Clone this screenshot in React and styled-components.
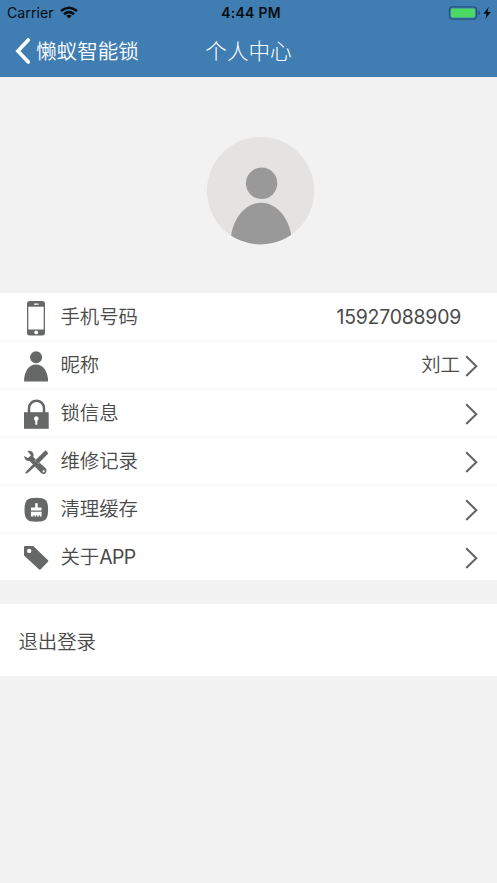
import React from "react";
import styled, { createGlobalStyle } from "styled-components";

const GlobalStyle = createGlobalStyle`
  * { box-sizing: border-box; }
  html, body { margin: 0; background: #f2f2f2; }
  body {
    font-family: Inter, "Noto Sans CJK SC", sans-serif;
    color: #4a4a4a;
    overflow: hidden;
  }
  svg { display: block; flex: none; }
`;

const Screen = styled.main`
  display: flex;
  flex-direction: column;
  width: 497px;
  height: 883px;
  background: #f2f2f2;
`;

const Header = styled.header`
  height: 77px;
  background: #3f7db3;
`;

const StatusBar = styled.div`
  display: grid;
  grid-template-columns: 1fr auto 1fr;
  align-items: center;
  height: 25px;
  padding: 0 6px 0 7px;
  color: #080c10;
  font-size: 14.1px;
  line-height: 24px;
`;

const Carrier = styled.div`
  display: flex;
  align-items: center;
  gap: 6px;
  letter-spacing: 0.05px;
`;

const Clock = styled.div`
  font-size: 13.9px;
  font-weight: 600;
  letter-spacing: 0.3px;
  padding: 1px 0 0 4px;
`;

const Power = styled.div`
  justify-self: end;
`;

const NavBar = styled.nav`
  display: grid;
  grid-template-columns: 1fr auto 1fr;
  align-items: center;
  height: 52px;
  padding: 0 15px;
  color: #fff;
`;

const BackButton = styled.button`
  display: flex;
  align-items: center;
  gap: 5px;
  padding: 0;
  border: 0;
  background: none;
  color: inherit;
  font: inherit;
  font-size: 20.6px;
  font-weight: 350;
  line-height: 30px;
`;

const BackText = styled.span`
  padding-top: 1px;
`;

const Title = styled.h1`
  margin: 0;
  font-size: 21.6px;
  font-weight: 300;
  line-height: 30px;
`;

const Profile = styled.section`
  height: 216px;
  padding: 60px 0 0 207px;
`;

const List = styled.ul`
  margin: 0;
  padding: 0;
  list-style: none;
  background: #fff;
`;

const Row = styled.li`
  display: flex;
  align-items: center;
  height: ${(p) => (p.$last ? 47 : 48)}px;
  padding: 0 19px 0 20px;
  border-bottom: ${(p) => (p.$last ? "0" : "1px solid #f4f4f4")};
  font-size: 19.4px;
  font-weight: 350;
  line-height: 28px;
`;

const Label = styled.span`
  margin-left: 8.4px;
  padding-top: 1px;
`;

const Latin = styled.span`
  letter-spacing: -0.6px;
  font-weight: 400;
`;

const Value = styled.span`
  margin-left: auto;
  margin-right: ${(p) => (p.$plain ? 17 : 5)}px;
  padding-top: ${(p) => (p.$plain ? 0 : 1)}px;
  font-weight: ${(p) => (p.$plain ? 400 : 350)};
  letter-spacing: ${(p) => (p.$plain ? "-0.2px" : "0")};
`;

const Logout = styled.button`
  display: flex;
  align-items: center;
  height: 72px;
  margin-top: 24px;
  padding: 1px 18.4px 0;
  border: 0;
  background: #fff;
  color: inherit;
  font: inherit;
  font-size: 19.4px;
  font-weight: 350;
`;

const WifiIcon = () => (
  <svg width="18" height="13" viewBox="0 0 18 13" fill="none" stroke="currentColor" strokeWidth="2.6">
    <path d="M1 5.1Q9 -1.6 17 5.1" />
    <path d="M4 8.2Q9 4 14 8.2" />
    <path d="M9 12.5L6.3 9.8Q9 7.7 11.7 9.8Z" fill="currentColor" stroke="none" />
  </svg>
);

const BatteryIcon = () => (
  <svg width="43" height="14" viewBox="0 0 43 14">
    <rect x="1.4" y="0.9" width="27.2" height="12.2" rx="3" fill="none" stroke="#26547c" strokeWidth="1.2" />
    <rect x="3" y="2.5" width="24" height="9" rx="1.4" fill="#4cd964" />
    <path d="M30.2 4.7Q31.9 5.2 31.9 7T30.2 9.3Z" fill="#26547c" />
    <path d="M40.7 1L35.4 7.8H38.6L37.4 13L42.7 6.1H39.4Z" fill="#080c10" />
  </svg>
);

const BackIcon = () => (
  <svg width="16" height="28" viewBox="0 0 16 28" fill="none" stroke="currentColor" strokeWidth="3.7" strokeLinecap="round">
    <path d="M13.3 3L2.9 14L13.3 25" strokeLinejoin="miter" />
  </svg>
);

const Avatar = () => (
  <svg width="108" height="108" viewBox="0 0 108 108">
    <clipPath id="avatarCircle"><circle cx="53.6" cy="53.7" r="53.7" /></clipPath>
    <circle cx="53.6" cy="53.7" r="53.7" fill="#e4e3e2" />
    <g clipPath="url(#avatarCircle)" fill="#999">
      <circle cx="54.6" cy="46.3" r="15.7" />
      <path d="M24 108V99C27 79 40 65.7 54.3 65.7S81 79 84.2 98V108Z" />
    </g>
  </svg>
);

const Chevron = styled(({ className }) => (
  <svg className={className} width="13" height="22" viewBox="0 0 13 22" fill="none" stroke="#666" strokeWidth="2.1">
    <path d="M1.2 1.3L11.3 11.2L1.2 21" />
  </svg>
))`
  margin-top: 3px;
  margin-left: ${(p) => (p.$push ? "auto" : "0")};
`;

const RowIcon = ({ children }) => (
  <svg width="32" height="47" viewBox="20 0 32 47" fill="#666867">{children}</svg>
);

const PhoneIcon = () => (
  <RowIcon>
    <rect x="27" y="8" width="18" height="34.5" rx="2.7" />
    <path fill="#fff" d="M28.3 13.7H43.7V36.5H28.3Z" />
    <rect x="33.8" y="10.4" width="5" height="1.3" rx="0.6" fill="#fff" />
    <circle cx="36.2" cy="39.4" r="1.9" fill="#fff" />
  </RowIcon>
);

const PersonIcon = () => (
  <RowIcon>
    <circle cx="36.1" cy="16.2" r="6" />
    <path d="M24 40.4C24.2 30.8 28.5 23.6 36 23.6S47.9 30.8 48.1 40.4Z" />
  </RowIcon>
);

const LockIcon = () => (
  <RowIcon>
    <path d="M24 23.2H48.7V39.8H24Z" />
    <path d="M29 24V19.5C29 9.2 44 9.2 44 19.5V24" fill="none" stroke="#666867" strokeWidth="2.5" />
    <path fill="#fff" d="M36.3 27.2A2.4 2.4 0 0 1 37.4 31.7L37.2 35.7H35.4L35.2 31.7A2.4 2.4 0 0 1 36.3 27.2Z" />
  </RowIcon>
);

const ToolsIcon = () => (
  <RowIcon>
    <path d="M27.3 14Q31 13 33.2 16Q34.2 18 33.3 20.1L46.2 31.7Q47.5 34.4 45.4 36.5Q42.6 38 40.6 35.6L29.6 23.9Q25 24.7 24 19.1L28 21L31 18.2Z" />
    <circle cx="43.7" cy="34.3" r="1.1" fill="#fff" />
    <path d="M47.3 14.5L45.2 13.3L34.8 23.6L38.2 27L48.4 16.6Z" stroke="#fff" strokeWidth="0.4" />
    <path d="M35.8 24.5L38 26.4L29.1 34.8L26.4 36.8L25.2 35.8L27.2 33.2Z" />
  </RowIcon>
);

const CleanIcon = () => (
  <RowIcon>
    <path d="M36.3 12.8C45.6 12.8 48.1 15.5 48.1 24.8S45.6 36.8 36.3 36.8S24.5 34.1 24.5 24.8S27 12.8 36.3 12.8Z" />
    <path fill="#fff" d="M35.2 18.2H37.7V22.6H41.5V25.6H31V22.6H35.2ZM31 26.7H41.6V31.6H39.8V30H38.9V31.6H37.1V30H36.2V31.6H34.5V30H33.6V31.6H31Z" />
  </RowIcon>
);

const TagIcon = () => (
  <RowIcon>
    <path d="M24 14.2Q24 13.1 25.1 13.1H33.2L48.1 27.3Q48.7 28 48 28.7L40.8 36.3Q40 37.1 39.2 36.4L24 22.4Z" />
    <circle cx="29.2" cy="17.9" r="2.2" fill="#fff" />
  </RowIcon>
);

const items = [
  { label: "手机号码", Icon: PhoneIcon, value: "15927088909", plain: true },
  { label: "昵称", Icon: PersonIcon, value: "刘工" },
  { label: "锁信息", Icon: LockIcon },
  { label: "维修记录", Icon: ToolsIcon },
  { label: "清理缓存", Icon: CleanIcon },
  { label: "关于", latin: "APP", Icon: TagIcon },
];

export default function App() {
  return (
    <Screen>
      <GlobalStyle />
      <Header>
        <StatusBar>
          <Carrier>Carrier <WifiIcon /></Carrier>
          <Clock>4:44 PM</Clock>
          <Power><BatteryIcon /></Power>
        </StatusBar>
        <NavBar>
          <BackButton><BackIcon /><BackText>懒蚁智能锁</BackText></BackButton>
          <Title>个人中心</Title>
        </NavBar>
      </Header>
      <Profile><Avatar /></Profile>
      <List>
        {items.map(({ label, latin, Icon, value, plain }, i) => (
          <Row key={label} $last={i === items.length - 1}>
            <Icon />
            <Label>{label}{latin && <Latin>{latin}</Latin>}</Label>
            {value && <Value $plain={plain}>{value}</Value>}
            {!plain && <Chevron $push={!value} />}
          </Row>
        ))}
      </List>
      <Logout>退出登录</Logout>
    </Screen>
  );
}
